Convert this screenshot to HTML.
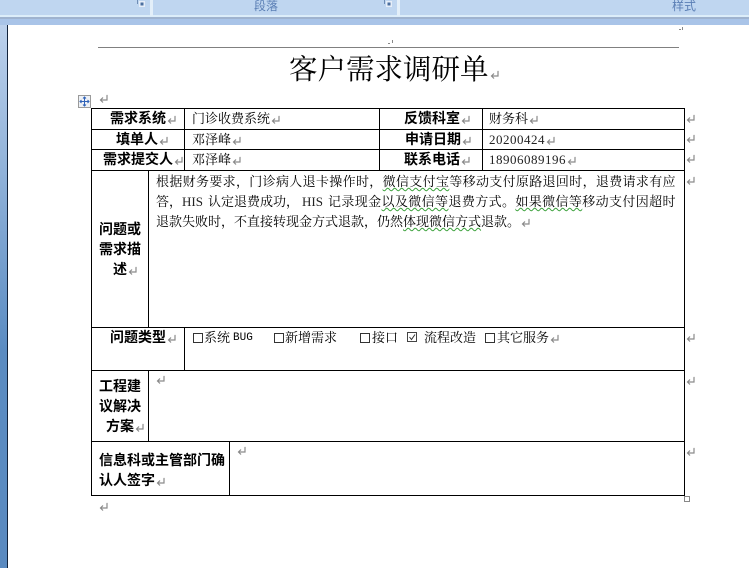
<!DOCTYPE html>
<html lang="zh"><head><meta charset="utf-8"><style>
html,body{margin:0;padding:0;background:#fff}
#p{position:relative;width:749px;height:568px;overflow:hidden;background:#fff;font-family:"Liberation Serif","Noto Serif CJK SC",serif;color:#000;font-size:13px;text-spacing-trim:space-all;font-kerning:none}
.a{position:absolute}
.t{position:absolute;white-space:nowrap;line-height:16px;height:16px}
.b{font-weight:700;font-size:14px;font-family:"Liberation Serif","Noto Sans CJK SC",sans-serif}
.l{position:absolute;background:#000}
.w{text-decoration:underline wavy #3aa03a;text-decoration-thickness:1px;text-underline-offset:1px}
.h{font-size:13px;color:#222}
svg.r{width:9px;height:9px;display:inline-block;vertical-align:-1px;margin-left:1px}
svg.s{position:absolute;width:9px;height:9px}
.c{position:absolute;width:8px;height:8px;border:1px solid #333;top:333px}
</style></head><body><div id="p">
<svg width="0" height="0" style="position:absolute"><defs><symbol id="r" viewBox="0 0 9 9"><path d="M7.5 1.5h0.5v4.5H2M4 3.5L1.5 6L4 8.500" fill="none" stroke="#8a8a8a" stroke-width="1.200"/></symbol></defs></svg>
<!-- ribbon -->
<div class="a" style="left:0;top:0;width:749px;height:15px;background:#bfd6f0"></div>
<div class="a" style="left:0;top:15px;width:749px;height:2px;background:#dcedf9"></div>
<div class="a" style="left:0;top:17px;width:749px;height:2px;background:#9fb3cf"></div>
<div class="a" style="left:0;top:19px;width:749px;height:6px;background:#a9c4e8"></div>
<div class="a" style="left:150px;top:0;width:3px;height:16px;background:#e3eff9"></div>
<div class="a" style="left:397px;top:0;width:3px;height:16px;background:#e3eff9"></div>
<div class="t" style="left:254px;top:-2px;font-family:'Liberation Sans','Noto Sans CJK SC',sans-serif;font-size:12px;color:#5b7fb5">段落</div>
<div class="t" style="left:672px;top:-2px;font-family:'Liberation Sans','Noto Sans CJK SC',sans-serif;font-size:12px;color:#5b7fb5">样式</div>
<svg class="a" style="left:137px;top:0" width="8" height="7" viewBox="0 0 8 7"><path d="M0.500 0V4" stroke="#6f8db5" fill="none"/><rect x="2" y="1" width="6" height="6" fill="#e6eef8"/><rect x="3.500" y="2.500" width="3" height="3" fill="#4a6f9f"/></svg>
<svg class="a" style="left:384px;top:0" width="8" height="7" viewBox="0 0 8 7"><path d="M0.500 0V4" stroke="#6f8db5" fill="none"/><rect x="2" y="1" width="6" height="6" fill="#e6eef8"/><rect x="3.500" y="2.500" width="3" height="3" fill="#4a6f9f"/></svg>
<!-- left strip -->
<div class="a" style="left:0;top:25px;width:7px;height:543px;background:linear-gradient(#bcd1ec,#5b8cc2 60%,#5a8ac0)"></div>
<div class="a" style="left:7px;top:25px;width:1px;height:543px;background:#12233b"></div>
<!-- header rule -->
<div class="a" style="left:98px;top:47px;width:581px;height:1px;background:#808080"></div>
<div class="a" style="left:392px;top:40px;width:1px;height:3px;background:#888"></div>
<div class="a" style="left:388px;top:43px;width:2px;height:1px;background:#888"></div>
<div class="a" style="left:682px;top:27px;width:1px;height:3px;background:#888"></div>
<div class="a" style="left:679px;top:29px;width:2px;height:1px;background:#888"></div>
<!-- title -->
<div class="t" style="left:289px;top:54px;height:34px;line-height:34px;font-size:28.500px">客户需求调研单</div>
<svg class="s" style="left:490px;top:70px"><use href="#r"/></svg>
<svg class="s" style="left:99px;top:94px"><use href="#r"/></svg>
<!-- move handle -->
<svg class="a" style="left:78px;top:95px" width="13" height="13" viewBox="0 0 13 13"><rect x=".5" y=".5" width="12" height="12" fill="#eef1f6" stroke="#9a9a9a"/><path d="M6.500 2v9M2 6.500h9M5 3.500L6.500 2L8 3.500M5 9.500L6.500 11L8 9.500M3.500 5L2 6.500L3.500 8M9.500 5L11 6.500L9.500 8" fill="none" stroke="#2f62b8"/></svg>
<!-- table lines -->
<div class="l" style="left:91px;top:108px;width:594px;height:1px"></div>
<div class="l" style="left:91px;top:129px;width:594px;height:1px"></div>
<div class="l" style="left:91px;top:149px;width:594px;height:1px"></div>
<div class="l" style="left:91px;top:170px;width:594px;height:1px"></div>
<div class="l" style="left:91px;top:327px;width:594px;height:1px"></div>
<div class="l" style="left:91px;top:370px;width:594px;height:1px"></div>
<div class="l" style="left:91px;top:441px;width:594px;height:1px"></div>
<div class="l" style="left:91px;top:495px;width:594px;height:1px"></div>
<div class="l" style="left:91px;top:108px;width:1px;height:388px"></div>
<div class="l" style="left:684px;top:108px;width:1px;height:388px"></div>
<div class="l" style="left:184px;top:108px;width:1px;height:62px"></div>
<div class="l" style="left:379px;top:108px;width:1px;height:62px"></div>
<div class="l" style="left:482px;top:108px;width:1px;height:62px"></div>
<div class="l" style="left:148px;top:170px;width:1px;height:157px"></div>
<div class="l" style="left:184px;top:327px;width:1px;height:43px"></div>
<div class="l" style="left:148px;top:370px;width:1px;height:71px"></div>
<div class="l" style="left:229px;top:441px;width:1px;height:54px"></div>
<div class="a" style="left:684px;top:496px;width:4px;height:4px;border:1px solid #888;background:#fff"></div>
<!-- rows -->
<div class="t b" style="left:110px;top:112px">需求系统<svg class="r"><use href="#r"/></svg></div>
<div class="t" style="left:192px;top:111px">门诊收费系统<svg class="r"><use href="#r"/></svg></div>
<div class="t b" style="left:404px;top:112px">反馈科室<svg class="r"><use href="#r"/></svg></div>
<div class="t" style="left:489px;top:111px">财务科<svg class="r"><use href="#r"/></svg></div>
<div class="t b" style="left:116px;top:133px">填单人<svg class="r"><use href="#r"/></svg></div>
<div class="t" style="left:192px;top:132px">邓泽峰<svg class="r"><use href="#r"/></svg></div>
<div class="t b" style="left:405px;top:133px">申请日期<svg class="r"><use href="#r"/></svg></div>
<div class="t" style="left:489px;top:132px;color:#222;letter-spacing:.5px">20200424<svg class="r"><use href="#r"/></svg></div>
<div class="t b" style="left:103px;top:153px">需求提交人<svg class="r"><use href="#r"/></svg></div>
<div class="t" style="left:192px;top:152px">邓泽峰<svg class="r"><use href="#r"/></svg></div>
<div class="t b" style="left:404px;top:153px">联系电话<svg class="r"><use href="#r"/></svg></div>
<div class="t" style="left:489px;top:152px;color:#222;letter-spacing:.5px">18906089196<svg class="r"><use href="#r"/></svg></div>
<!-- body -->
<div class="t" style="left:156px;top:174px;letter-spacing:.33px">根据财务要求，门诊病人退卡操作时，<span class="w">微信支付宝</span>等移动支付原路退回时，退费请求有应</div>
<svg class="s" style="left:686px;top:114px"><use href="#r"/></svg>
<svg class="s" style="left:686px;top:134px"><use href="#r"/></svg>
<svg class="s" style="left:686px;top:154px"><use href="#r"/></svg>
<svg class="s" style="left:686px;top:176px"><use href="#r"/></svg>
<svg class="s" style="left:686px;top:333px"><use href="#r"/></svg>
<svg class="s" style="left:686px;top:376px"><use href="#r"/></svg>
<svg class="s" style="left:686px;top:447px"><use href="#r"/></svg>
<div class="t" style="left:156px;top:194px">答，</div>
<div class="t h" style="left:182px;top:194px">HIS</div>
<div class="t" style="left:208px;top:194px">认定退费成功，</div>
<div class="t h" style="left:302px;top:194px">HIS</div>
<div class="t" style="left:328px;top:194px;letter-spacing:.38px">记录现金<span class="w">以及微信等</span>退费方式。<span class="w">如果微信等</span>移动支付因超时</div>
<div class="t" style="left:156px;top:214px">退款失败时，不直接转现金方式退款，仍然<span class="w">体现微信方式</span>退款。<svg class="r"><use href="#r"/></svg></div>
<div class="t b" style="left:99px;top:223px">问题或</div>
<div class="t b" style="left:99px;top:243px">需求描</div>
<div class="t b" style="left:113px;top:263px">述<svg class="r"><use href="#r"/></svg></div>
<!-- type row -->
<div class="t b" style="left:110px;top:331px">问题类型<svg class="r"><use href="#r"/></svg></div>
<div class="c" style="left:193px"></div>
<div class="t" style="left:204px;top:330px">系统</div>
<div class="t" style="left:233px;top:330px;font-size:11px;font-family:'Liberation Mono',monospace">BUG</div>
<div class="c" style="left:274px"></div>
<div class="t" style="left:285px;top:330px">新增需求</div>
<div class="c" style="left:360px"></div>
<div class="t" style="left:372px;top:330px">接口</div>
<svg class="a" style="left:407px;top:332px" width="11" height="11" viewBox="0 0 11 11"><rect x=".5" y=".5" width="9" height="9" fill="#fff" stroke="#444"/><path d="M2.500 5l2 2.500L8 2.500" fill="none" stroke="#333"/></svg>
<div class="t" style="left:424px;top:330px">流程改造</div>
<div class="c" style="left:485px"></div>
<div class="t" style="left:497px;top:330px">其它服务<svg class="r"><use href="#r"/></svg></div>
<!-- solution -->
<svg class="s" style="left:156px;top:375px"><use href="#r"/></svg>
<div class="t b" style="left:99px;top:380px">工程建</div>
<div class="t b" style="left:99px;top:400px">议解决</div>
<div class="t b" style="left:106px;top:420px">方案<svg class="r"><use href="#r"/></svg></div>
<!-- sign -->
<svg class="s" style="left:237px;top:446px"><use href="#r"/></svg>
<div class="t b" style="left:99px;top:454px">信息科或主管部门确</div>
<div class="t b" style="left:99px;top:474px">认人签字<svg class="r"><use href="#r"/></svg></div>
<svg class="s" style="left:99px;top:502px"><use href="#r"/></svg>
</div></body></html>
